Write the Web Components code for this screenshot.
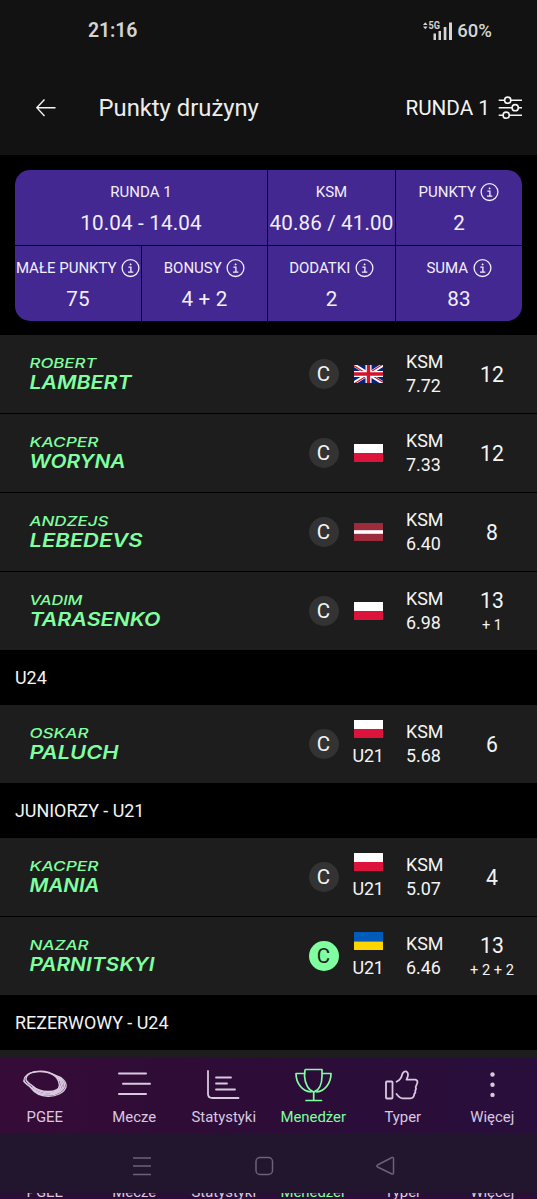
<!DOCTYPE html>
<html lang="pl">
<head>
<meta charset="utf-8">
<title>Punkty drużyny</title>
<style>
html,body{margin:0;background:#000}
body{width:537px;height:1199px;overflow:hidden;font-family:Roboto,"Noto Sans",sans-serif;color:#f4f4f4}
</style>
</head>
<body>
<team-app></team-app>
<script>
const make = (name, html) => customElements.define(name, class extends HTMLElement {
  constructor() {
    super();
    this.attachShadow({mode: 'open'});
  }
  connectedCallback() {
    const t = document.createElement('template');
    t.innerHTML = typeof html === 'function' ? html(this) : html;
    this.shadowRoot.replaceChildren(t.content.cloneNode(true));
  }
});

make('status-bar', `
<style>
:host{display:flex;height:60px;box-sizing:border-box;padding:0 45px 0 88px;justify-content:space-between;align-items:center;color:#d4d4d4;font-weight:600}
.time{font-size:19.500px;letter-spacing:-.1px}
.right{display:flex;align-items:center;padding-top:1px}
.pct{font-size:18.500px;margin-left:4.500px;font-weight:500}
svg{display:block}
</style>
<span class="time">21:16</span>
<div class="right">
<svg width="32" height="22" viewBox="0 0 32 22" fill="#d4d4d4"><path d="M2 5 4.300 2.300 6.600 5ZM2 6.600 4.300 9.300 6.600 6.600Z"/><text x="7.500" y="9.200" font-size="10" font-weight="700" textLength="11.500" lengthAdjust="spacingAndGlyphs">5G</text><path d="M12.500 13.500h2.500v6.500H12.500zM17.500 11H20v9h-2.500zM22.700 7h2.700v13H22.700zM28 2.500h3v17.500h-3z"/></svg>
<span class="pct">60%</span></div>`);

make('app-header', `
<style>
:host{display:flex;height:95px;box-sizing:border-box;padding:0 14px 0 36px;align-items:center}
svg{display:block;flex:none}
h1{margin:0 0 0 42.500px;font-weight:400;font-size:23.800px;color:#ededed;flex:1}
span{font-size:20.700px;margin-right:8px}
</style>
<svg width="20" height="20" viewBox="0 0 20 20" fill="none" stroke="#f4f4f4" stroke-width="1.400"><path d="M8.500 1.500 0.800 9.700 8.500 18M.8 9.700H19.500"/></svg>
<h1>Punkty drużyny</h1><span>RUNDA 1</span>
<svg width="25" height="26" viewBox="0 0 25 26" fill="none" stroke="#f4f4f4" stroke-width="1.600"><path d="M.7 5.200H6.500M13 5.200H24M.7 12.700H14M20.500 12.700H24M.7 20.200H5M11.500 20.200H24"/><circle cx="9.700" cy="5.200" r="3.100"/><circle cx="17.200" cy="12.700" r="3.100"/><circle cx="8.200" cy="20.200" r="3.100"/></svg>`);

make('stat-cell', el => `
<style>
:host{display:flex;flex-direction:column;align-items:center;background:#432892;color:#f3effa;white-space:nowrap;min-width:0}
.label{display:flex;align-items:center;gap:4.500px;height:20px;margin-top:12px;font-size:15px}
.value{font-size:20.600px;line-height:24px;margin-top:9px;letter-spacing:.15px}
svg{display:block}
</style>
<div class="label"><span>${el.getAttribute('label')}</span>${el.hasAttribute('info') ? `<svg width="19" height="19" viewBox="0 0 19 19" fill="none" stroke="#f3effa" stroke-width="1.300"><circle cx="9.500" cy="9.100" r="8.400"/><path d="M7.400 8.200H9.900V13M7 13.100H12.300"/><circle cx="9.600" cy="5.400" r=".6" fill="#f3effa" stroke-width=".8"/></svg>` : ''}</div>
<div class="value"><slot></slot></div>`);

make('score-summary', `
<style>
:host{display:grid;margin:15px 15px 0;width:507px;height:151px;grid-template-columns:126px 125px 127px 126px;grid-template-rows:75px 75px;gap:1px;border-radius:15px;overflow:hidden}
.wide{grid-column:span 2}
</style>
<stat-cell class="wide" label="RUNDA 1">10.04 - 14.04</stat-cell>
<stat-cell label="KSM">40.86 / 41.00</stat-cell>
<stat-cell label="PUNKTY" info>2</stat-cell>
<stat-cell label="MAŁE PUNKTY" info>75</stat-cell>
<stat-cell label="BONUSY" info>4 + 2</stat-cell>
<stat-cell label="DODATKI" info>2</stat-cell>
<stat-cell label="SUMA" info>83</stat-cell>`);

const flags = {
  pl: '<path fill="#fff" d="M0 0h29v9H0z"/><path fill="#dc143c" d="M0 9h29v9H0z"/>',
  ua: '<path fill="#005bbb" d="M0 0h29v9.500H0z"/><path fill="#ffd500" d="M0 9.500h29V18H0z"/>',
  lv: '<path fill="#9e2b3c" d="M0 0h29v18H0z"/><path fill="#fff" d="M0 7.200h29v3.600H0z"/>',
  gb: '<path fill="#00247d" d="M0 0h29v18H0z"/><path stroke="#fff" stroke-width="3.600" d="m0 0 29 18M29 0 0 18"/><path stroke="#cf142b" stroke-width="1.100" d="M0 .8 14.500 9.800M14.500 8.200 29 17.200M29-.8 14.500 8.200M14.500 9.800 0 18.800"/><path stroke="#fff" stroke-width="6" d="M14.500 0v18M0 9h29"/><path stroke="#cf142b" stroke-width="3.400" d="M14.500 0v18M0 9h29"/>'
};
make('nation-flag', el => `
<style>:host{display:block;width:29px;height:18px}svg{display:block}</style>
<svg width="29" height="18" viewBox="0 0 29 18" fill="none">${flags[el.getAttribute('code')]}</svg>`);

make('player-row', el => {
  const a = n => el.getAttribute(n);
  return `
<style>
:host{display:grid;grid-template-columns:309px 30px 15px 29px 23px 50px 1fr;box-sizing:border-box;height:79px;background:#1d1d1d;align-items:center;border-bottom:1px solid #000}
:host([last]){border-bottom:0;height:78px}
.name{padding-left:29px;box-sizing:border-box}
svg{display:block;overflow:visible}
.cap{width:30px;height:30px;border-radius:50%;background:#333;display:flex;align-items:center;justify-content:center;font-size:20.500px;grid-column:2;padding-right:1px;box-sizing:border-box}
:host([captain]) .cap{background:#7fff9f;color:#1d1d1d}
.nat{grid-column:4;display:flex;flex-direction:column;align-items:center}
.age,.ksm{font-size:17.900px;line-height:24px}
.nat.junior{align-self:start;padding-top:15px}
.age{margin-top:6px;letter-spacing:-.3px;margin-left:-1px}
.ksm{grid-column:6}
.pts{grid-column:7;text-align:center;padding:2px 8px 0 19px;margin-left:-20px;font-size:21.200px;line-height:24px}
.extra{font-size:14.600px;line-height:22px;margin-top:1px}
</style>
<div class="name">${a('first') ? `<svg width="150" height="42" font-family="Inter" font-style="italic" fill="#7fff9f"><text x=".5" y="15" font-size="13.600" font-weight="500" textLength="${a('fw')}" lengthAdjust="spacingAndGlyphs">${a('first')}</text><text x=".5" y="36.200" font-size="18.200" font-weight="600" textLength="${a('lw')}" lengthAdjust="spacingAndGlyphs">${a('surname')}</text></svg>` : ''}</div>
${a('first') ? `<div class="cap">C</div>
<div class="nat ${a('age') ? 'junior' : ''}"><nation-flag code="${a('flag')}"></nation-flag>${a('age') ? `<span class="age">${a('age')}</span>` : ''}</div>
<div class="ksm">KSM<br>${a('ksm')}</div>
<div class="pts">${a('points')}${a('extra') ? `<div class="extra">${a('extra')}</div>` : ''}</div>` : ''}`;
});

make('group-title', `
<style>:host{display:flex;height:55px;box-sizing:border-box;align-items:center;padding:0 0 0 15px;font-size:17.900px}</style><slot></slot>`);

const icons = {
  pgee: '<g stroke-linejoin="round"><path stroke-width="1.500" d="M7 6C11 3 20 2.500 27 4.500C34 7 37 12 37.500 17C37.500 22 32 23.500 26 23.500C19 23.500 13 20.500 10 17.500C7 15 3.500 14 4 10.500C4.300 8 5.500 7 7 6Z"/><path stroke-width="1.300" d="M5 7C9 3.500 19 2.500 27 5C36 8 41 13 41 18C40 23 34 26 27 26C19 26 13 23 10 20C7 16 2 16 2 12C2.200 10 3 8.500 5 7Z"/><path stroke-width="1.300" d="M33 7C40 9 45 14 44 19C42 25 34 28.500 26 28.300C18 28 12 24 9 20C7 17 2 15.500 1.500 12.500"/><path stroke-width="1.700" d="M30 6C36 8 39.500 13 39.300 17.500C38.500 22.500 34 24.700 27 24.700C18 24.500 14 22 10.500 18.700"/><path stroke-width="1.600" d="M12 22C16 26 21 27.300 27 27C36 26.500 42 22 42.500 17.500C42.500 14 40 11 36 8.700"/></g>',
  list: '<path stroke-width="2" stroke-linecap="round" d="M7 5.500H34M11 15.700H38M7 25.900H34"/>',
  stats: '<path stroke-width="1.800" stroke-linecap="round" d="M7 3V26Q7 30 11.500 30H37.500M15 9.500H30M15 15.500H26M15 21.500H34"/>',
  cup: '<g stroke-width="1.700" stroke-linejoin="round" stroke-linecap="round"><path d="M14.500 1.500H31V8C31 16 28 22.500 22.700 24C17.500 22.500 14 16 13.500 8L14 2Z"/><path d="M13.500 5.500H5C5 15 11 23 20 24M31.500 5.500H40C40 15 34 23 25.500 24M22.700 24V32.500M15 32.500H30.500"/></g>',
  thumb: '<g stroke-width="1.800" stroke-linejoin="round" stroke-linecap="round"><rect x="6" y="13.500" width="6.500" height="17" rx=".8"/><path d="M16.500 13.700C21 11.500 21.500 9 22.500 5.500Q24 2.700 26.700 3.700Q29.500 5.500 26.500 11.700H35.500Q38 12.500 37.300 15L35.700 19Q36.500 20.500 35.300 22.500Q35.800 24.500 34.300 26Q34 30.300 30.500 30.300H22.500C20 30.300 18 28 16.500 26"/></g>',
  more: '<g fill="currentColor" stroke="none"><circle cx="22.500" cy="6.500" r="2.200"/><circle cx="22.500" cy="16.700" r="2.200"/><circle cx="22.500" cy="26.900" r="2.200"/></g>'
};
make('nav-tab', el => `
<style>
:host{display:flex;flex-direction:column;align-items:center;color:#d9c9e0;font-size:14.900px;line-height:20px;white-space:nowrap}
:host([active]){color:#7fff9f}
svg{display:block;margin:11px 0 5px;overflow:visible}
</style>
${el.hasAttribute('icon') ? `<svg width="45" height="34" viewBox="0 0 45 34" fill="none" stroke="currentColor">${icons[el.getAttribute('icon')]}</svg>` : ''}<span><slot></slot></span>`);

make('bottom-nav', `
<style>
:host{display:grid;grid-template-columns:repeat(6,1fr);height:76px;background:radial-gradient(circle at 0 60%,#370b38 0,#300c36 25%,#2b0d38 60%,#290e3b 100%)}
</style>
<nav-tab icon="pgee">PGEE</nav-tab><nav-tab icon="list">Mecze</nav-tab><nav-tab icon="stats">Statystyki</nav-tab><nav-tab icon="cup" active>Menedżer</nav-tab><nav-tab icon="thumb">Typer</nav-tab><nav-tab icon="more">Więcej</nav-tab>`);

make('system-nav', `
<style>
:host{display:flex;height:60px;background:#22152e;align-items:center;padding:6px 142px 0 132px;box-sizing:border-box;justify-content:space-between}
svg{display:block}
</style>
<svg width="20" height="20" fill="none" stroke="#6c6175" stroke-width="1.500"><path d="M1 2H19M1 10H19M1 18.500H19"/></svg>
<svg width="20" height="20" fill="none" stroke="#6c6175" stroke-width="1.500"><rect x="2" y="1.500" width="16.500" height="17" rx="4"/></svg>
<svg width="20" height="20" fill="none" stroke="#6c6175" stroke-width="1.500" stroke-linejoin="round"><path d="M2.500 9 17 1.500Q18.500 1 18.500 2.500V17Q18.500 18.500 17 18L2.500 11Q1 10 2.500 9Z"/></svg>`);

make('nav-echo', `
<style>
:host{display:grid;grid-template-columns:repeat(6,1fr);height:6px;overflow:hidden;background:#2c0d38;align-content:end}
nav-tab{margin-bottom:-3px}
</style>
<nav-tab>PGEE</nav-tab><nav-tab>Mecze</nav-tab><nav-tab>Statystyki</nav-tab><nav-tab active>Menedżer</nav-tab><nav-tab>Typer</nav-tab><nav-tab>Więcej</nav-tab>`);

make('team-app', `
<style>
:host{display:flex;flex-direction:column;width:537px;height:1199px;overflow:hidden;background:#000}
header{background:#121212;height:155px;flex:none}
score-summary{flex:none}
main{margin-top:14px;height:722px;flex:none;overflow:hidden}
</style>
<header><status-bar></status-bar><app-header></app-header></header>
<score-summary></score-summary>
<main>
<player-row first="ROBERT" surname="LAMBERT" fw="67" lw="102" flag="gb" ksm="7.72" points="12"></player-row>
<player-row first="KACPER" surname="WORYNA" fw="69" lw="96" flag="pl" ksm="7.33" points="12"></player-row>
<player-row first="ANDZEJS" surname="LEBEDEVS" fw="79" lw="113" flag="lv" ksm="6.40" points="8"></player-row>
<player-row last first="VADIM" surname="TARASENKO" fw="53" lw="131" flag="pl" ksm="6.98" points="13" extra="+ 1"></player-row>
<group-title>U24</group-title>
<player-row last first="OSKAR" surname="PALUCH" fw="59" lw="89" flag="pl" age="U21" ksm="5.68" points="6"></player-row>
<group-title>JUNIORZY - U21</group-title>
<player-row first="KACPER" surname="MANIA" fw="69" lw="70" flag="pl" age="U21" ksm="5.07" points="4"></player-row>
<player-row last captain first="NAZAR" surname="PARNITSKYI" fw="59" lw="125" flag="ua" age="U21" ksm="6.46" points="13" extra="+ 2 + 2"></player-row>
<group-title>REZERWOWY - U24</group-title>
<player-row last></player-row>
</main>
<bottom-nav></bottom-nav>
<system-nav></system-nav>
<nav-echo></nav-echo>`);
</script>
</body>
</html>
